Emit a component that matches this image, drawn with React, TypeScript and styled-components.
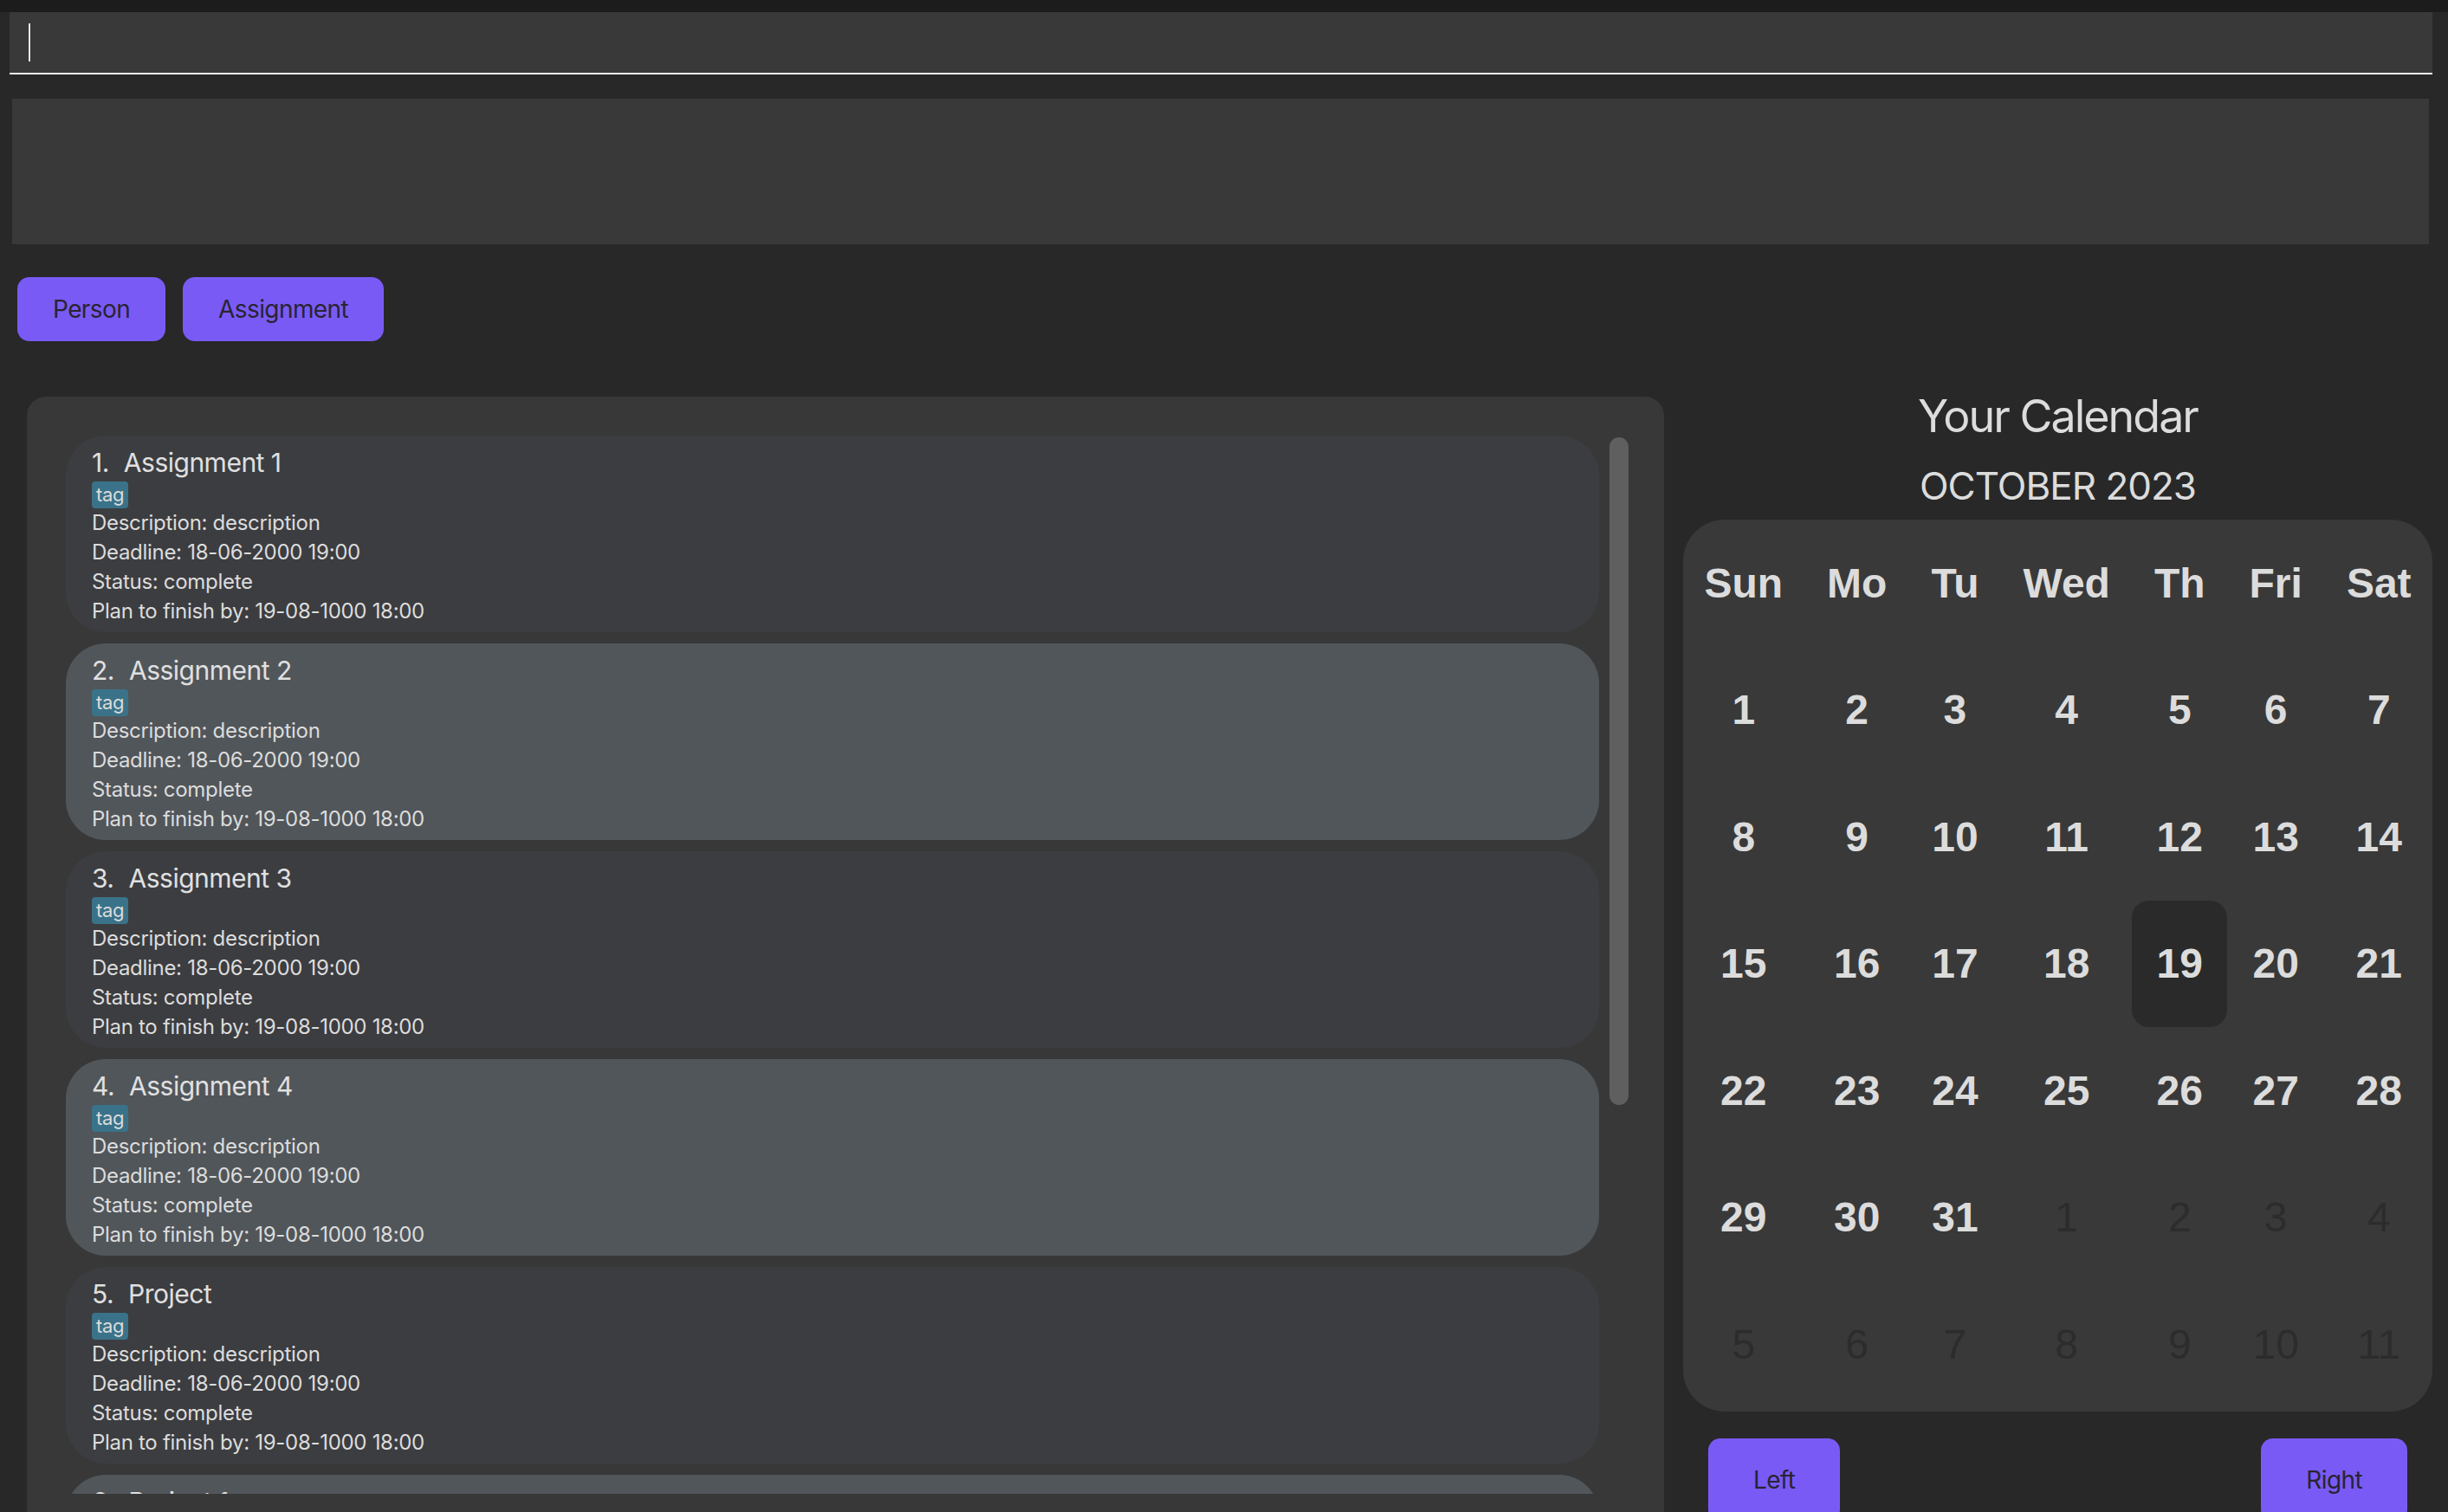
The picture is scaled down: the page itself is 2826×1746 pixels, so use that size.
import React from "react";
import styled, { createGlobalStyle } from "styled-components";

const GlobalStyle = createGlobalStyle`
  html, body {
    margin: 0;
    padding: 0;
    background: #282828;
    overflow: hidden;
  }
  body {
    font-family: Inter, "Noto Sans", sans-serif;
    color: #dcdcdc;
  }
`;

const Page = styled.div`
  width: 2826px;
  height: 1746px;
  display: flex;
  flex-direction: column;
  overflow: hidden;
  background: #282828;
`;

const TopStrip = styled.div`
  height: 14px;
  background: #1c1c1c;
  flex-shrink: 0;
`;

const CommandBar = styled.div`
  flex-shrink: 0;
  height: 70px;
  margin: 0 18px 0 11px;
  padding-left: 22px;
  background: #393939;
  border-bottom: 2px solid #f2f2f2;
  display: flex;
  align-items: center;
`;

const Caret = styled.span`
  width: 2px;
  height: 44px;
  background: #e8e8e8;
`;

const ResultBox = styled.div`
  flex-shrink: 0;
  height: 168px;
  margin: 28px 22px 0 14px;
  background: #393939;
`;

const TabRow = styled.div`
  flex-shrink: 0;
  display: flex;
  gap: 20px;
  padding-left: 20px;
  margin-top: 38px;
`;

const PurpleButton = styled.button<{ $tall?: boolean }>`
  height: ${(p) => (p.$tall ? 96 : 74)}px;
  padding: 0 ${(p) => (p.$tall ? 52 : 41)}px;
  border: none;
  border-radius: 14px;
  background: #7a5af5;
  color: #282430;
  font-family: Inter, "Noto Sans", sans-serif;
  font-size: 28px;
  letter-spacing: -0.6px;
  cursor: pointer;
`;

const Main = styled.div`
  flex: 1;
  min-height: 0;
  display: flex;
  margin-top: 64px;
  padding-left: 31px;
`;

const ListPanel = styled.section`
  width: 1890px;
  box-sizing: border-box;
  display: flex;
  align-items: flex-start;
  gap: 12px;
  padding: 45px 41px 0 45px;
  background: #383838;
  border-radius: 22px 22px 0 0;
`;

const ListViewport = styled.div`
  width: 1770px;
  height: 1222px;
  overflow: hidden;
  display: flex;
  flex-direction: column;
  gap: 13px;
`;

const Scrollbar = styled.div`
  width: 22px;
  height: 771px;
  margin-top: 2px;
  border-radius: 11px;
  background: #5f5f5f;
`;

const Card = styled.article<{ $alt: boolean }>`
  flex-shrink: 0;
  height: 227px;
  box-sizing: border-box;
  padding: 13px 30px 0 30px;
  border-radius: 46px;
  background: ${(p) => (p.$alt ? "#51565a" : "#3c3d40")};
`;

const CardTitle = styled.div`
  font-size: 30px;
  line-height: 36px;
  color: #e0e0e0;
  letter-spacing: -0.5px;
  display: flex;
`;

const Index = styled.span`
  margin-right: 17px;
`;

const Tag = styled.span`
  display: inline-block;
  margin-top: 4px;
  height: 31px;
  padding: 0 5px;
  border-radius: 4px;
  background: #3a7389;
  font-size: 22px;
  line-height: 31px;
  letter-spacing: -0.3px;
  color: #dcdcdc;
`;

const Field = styled.div`
  font-size: 24px;
  line-height: 34px;
  letter-spacing: -0.3px;
  color: #dcdcdc;
  &:first-of-type {
    margin-top: 1px;
  }
`;

const Side = styled.aside`
  width: 865px;
  margin-left: 22px;
  display: flex;
  flex-direction: column;
  align-items: center;
`;

const CalTitle = styled.h1`
  margin: 0;
  font-weight: 400;
  font-size: 52px;
  line-height: 46px;
  letter-spacing: -2px;
  color: #dcdcdc;
`;

const MonthLabel = styled.h2`
  margin: 31px 0 0;
  font-weight: 400;
  font-size: 44px;
  line-height: 53px;
  letter-spacing: -1px;
  color: #dcdcdc;
`;

const CalendarBox = styled.div`
  width: 865px;
  margin-top: 12px;
  padding-bottom: 4px;
  background: #393939;
  border-radius: 48px;
  display: grid;
  grid-template-columns: repeat(7, auto);
  grid-auto-rows: 146.5px;
  justify-content: center;
`;

const Cell = styled.div<{ $muted?: boolean; $today?: boolean }>`
  display: flex;
  align-items: center;
  justify-content: center;
  padding: 0 25.5px;
  font-family: "Liberation Sans", Arial, sans-serif;
  font-size: 48px;
  font-weight: ${(p) => (p.$muted ? 400 : 700)};
  color: ${(p) => (p.$muted ? "#2c2c2c" : "#dcdcdc")};
  background: ${(p) => (p.$today ? "#2a2a2a" : "transparent")};
  border-radius: ${(p) => (p.$today ? "20px" : "0")};
`;

const NavRow = styled.div`
  width: 865px;
  box-sizing: border-box;
  display: flex;
  justify-content: space-between;
  padding: 0 29px;
  margin-top: 31px;
`;

const days = ["Sun", "Mo", "Tu", "Wed", "Th", "Fri", "Sat"];

type Day = { n: number; muted?: boolean; today?: boolean };

const buildDays = (): Day[] => {
  const out: Day[] = [];
  for (let i = 1; i <= 31; i++) out.push({ n: i, today: i === 19 });
  for (let i = 1; i <= 11; i++) out.push({ n: i, muted: true });
  return out;
};

const items = [
  "Assignment 1",
  "Assignment 2",
  "Assignment 3",
  "Assignment 4",
  "Project",
  "Project 1",
];

export default function App() {
  return (
    <>
      <GlobalStyle />
      <Page>
        <TopStrip />
        <CommandBar>
          <Caret />
        </CommandBar>
        <ResultBox />
        <TabRow>
          <PurpleButton>Person</PurpleButton>
          <PurpleButton>Assignment</PurpleButton>
        </TabRow>
        <Main>
          <ListPanel>
            <ListViewport>
              {items.map((name, i) => (
                <Card key={name} $alt={i % 2 === 1}>
                  <CardTitle>
                    <Index>{i + 1}.</Index>
                    <span>{name}</span>
                  </CardTitle>
                  <Tag>tag</Tag>
                  <Field>Description: description</Field>
                  <Field>Deadline: 18-06-2000 19:00</Field>
                  <Field>Status: complete</Field>
                  <Field>Plan to finish by: 19-08-1000 18:00</Field>
                </Card>
              ))}
            </ListViewport>
            <Scrollbar />
          </ListPanel>
          <Side>
            <CalTitle>Your Calendar</CalTitle>
            <MonthLabel>OCTOBER 2023</MonthLabel>
            <CalendarBox>
              {days.map((d) => (
                <Cell key={d}>{d}</Cell>
              ))}
              {buildDays().map((d, i) => (
                <Cell key={i} $muted={d.muted} $today={d.today}>
                  {d.n}
                </Cell>
              ))}
            </CalendarBox>
            <NavRow>
              <PurpleButton $tall>Left</PurpleButton>
              <PurpleButton $tall>Right</PurpleButton>
            </NavRow>
          </Side>
        </Main>
      </Page>
    </>
  );
}
